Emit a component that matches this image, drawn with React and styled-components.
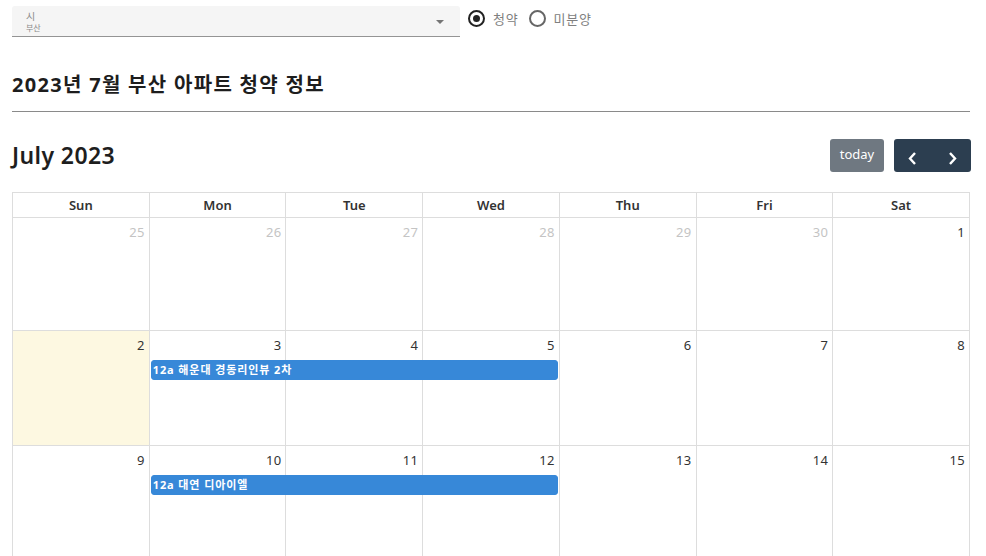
import React from "react"
import styled, { createGlobalStyle } from "styled-components"

const GlobalStyle = createGlobalStyle`
  body {
    margin: 0;
    background: #fff;
    font-family: "Noto Sans", "Noto Sans CJK KR", sans-serif;
    color: #212529;
  }
`

const weeks = [
  [
    { n: 25, other: true },
    { n: 26, other: true },
    { n: 27, other: true },
    { n: 28, other: true },
    { n: 29, other: true },
    { n: 30, other: true },
    { n: 1 },
  ],
  [
    { n: 2, today: true },
    { n: 3 },
    { n: 4 },
    { n: 5 },
    { n: 6 },
    { n: 7 },
    { n: 8 },
  ],
  [{ n: 9 }, { n: 10 }, { n: 11 }, { n: 12 }, { n: 13 }, { n: 14 }, { n: 15 }],
]

const weekHeights = [113, 115, 115]

const events = [
  [],
  [{ start: 2, end: 5, title: "해운대 경동리인뷰 2차" }],
  [{ start: 2, end: 5, title: "대연 디아이엘" }],
]

const days = ["Sun", "Mon", "Tue", "Wed", "Thu", "Fri", "Sat"]

function Radio({ checked, label }) {
  return (
    <RadioLabel>
      <RadioCircle $checked={checked} />
      {label}
    </RadioLabel>
  )
}

function App() {
  return (
    <Page>
      <GlobalStyle />
      <FilterBar>
        <Select>
          <SelectText>
            <SelectLabel>시</SelectLabel>
            <SelectValue>부산</SelectValue>
          </SelectText>
          <Caret />
        </Select>
        <RadioGroup>
          <Radio checked label="청약" />
          <Radio label="미분양" />
        </RadioGroup>
      </FilterBar>

      <Heading>2023년 7월 부산 아파트 청약 정보</Heading>
      <Rule />

      <Toolbar>
        <MonthTitle>July 2023</MonthTitle>
        <Buttons>
          <TodayButton>today</TodayButton>
          <NavGroup>
            <NavButton aria-label="prev">
              <svg width="14" height="16" viewBox="0 0 14 16">
                <path d="M9 3 L4 8.5 L9 14" fill="none" stroke="#fff" strokeWidth="2.4" />
              </svg>
            </NavButton>
            <NavButton aria-label="next">
              <svg width="14" height="16" viewBox="0 0 14 16">
                <path d="M5 3 L10 8.5 L5 14" fill="none" stroke="#fff" strokeWidth="2.4" />
              </svg>
            </NavButton>
          </NavGroup>
        </Buttons>
      </Toolbar>

      <Calendar>
        <HeaderRow>
          {days.map(d => (
            <HeaderCell key={d}>{d}</HeaderCell>
          ))}
        </HeaderRow>
        {weeks.map((week, wi) => (
          <Week key={wi} $height={weekHeights[wi]}>
            {week.map((day, di) => (
              <DayCell key={di} $col={di + 1} $today={day.today}>
                <DayNumber $other={day.other}>{day.n}</DayNumber>
              </DayCell>
            ))}
            {events[wi].map((ev, ei) => (
              <EventBar key={ei} $start={ev.start} $end={ev.end}>
                12a {ev.title}
              </EventBar>
            ))}
          </Week>
        ))}
      </Calendar>
    </Page>
  )
}

const Page = styled.div`
  padding: 6px 16px 0 12px;
  width: 958px;
`
const FilterBar = styled.div`
  display: flex;
  align-items: center;
  gap: 8px;
`
const Select = styled.div`
  width: 448px;
  height: 31px;
  background: #f5f5f5;
  border-bottom: 1px solid #949494;
  display: flex;
  align-items: center;
  justify-content: space-between;
  padding: 0 16px 0 14px;
  box-sizing: border-box;
  border-radius: 3px 3px 0 0;
`
const SelectText = styled.div`
  display: flex;
  flex-direction: column;
  padding-top: 1px;
`
const SelectLabel = styled.span`
  font-size: 10px;
  line-height: 11px;
  color: #8a8a8a;
`
const SelectValue = styled.span`
  font-size: 8px;
  line-height: 9px;
  color: #8a8a8a;
  margin-top: 1px;
`
const Caret = styled.span`
  width: 0;
  height: 0;
  border-left: 4px solid transparent;
  border-right: 4px solid transparent;
  border-top: 4px solid #757575;
  margin-top: 1px;
`
const RadioGroup = styled.div`
  display: flex;
  align-items: center;
  gap: 10px;
`
const RadioLabel = styled.label`
  display: flex;
  align-items: center;
  gap: 8px;
  font-size: 13px;
  letter-spacing: 0.8px;
  color: #808080;
  margin-top: -6px;
`
const RadioCircle = styled.span`
  width: 17px;
  height: 17px;
  box-sizing: border-box;
  border-radius: 50%;
  border: 2px solid ${p => (p.$checked ? "#222" : "#666")};
  display: flex;
  align-items: center;
  justify-content: center;
  &::after {
    content: "";
    width: 7px;
    height: 7px;
    border-radius: 50%;
    background: ${p => (p.$checked ? "#222" : "transparent")};
  }
`
const Heading = styled.h2`
  margin: 34px 0 0;
  font-size: 20px;
  font-weight: 700;
  letter-spacing: 1.3px;
  color: #1d1d1d;
  line-height: 28px;
`
const Rule = styled.hr`
  margin: 12px 0 0;
  border: 0;
  border-top: 1px solid #8a8a8a;
`
const Toolbar = styled.div`
  display: flex;
  align-items: center;
  justify-content: space-between;
  margin-top: 26px;
`
const MonthTitle = styled.h2`
  margin: 0;
  font-size: 23px;
  font-weight: 600;
  letter-spacing: 0.4px;
  color: #1e1e1e;
  line-height: 34px;
`
const Buttons = styled.div`
  display: flex;
  gap: 10px;
  margin-right: -1px;
`
const TodayButton = styled.button`
  width: 54px;
  height: 33px;
  border: 0;
  border-radius: 3px;
  background: #6f7881;
  color: #fff;
  font-family: inherit;
  font-size: 13px;
  padding: 0 0 2px;
`
const NavGroup = styled.div`
  display: flex;
  background: #2c3e50;
  border-radius: 3px;
  width: 77px;
  height: 33px;
  overflow: hidden;
`
const NavButton = styled.button`
  flex: 1;
  border: 0;
  background: transparent;
  display: flex;
  align-items: center;
  justify-content: center;
  padding: 6px 0 0;
`
const Calendar = styled.div`
  margin-top: 20px;
  border-top: 1px solid #ddd;
  border-left: 1px solid #ddd;
`
const HeaderRow = styled.div`
  display: grid;
  grid-template-columns: repeat(7, 1fr);
`
const HeaderCell = styled.div`
  border-right: 1px solid #ddd;
  border-bottom: 1px solid #ddd;
  height: 24px;
  font-size: 13px;
  font-weight: 600;
  color: #333;
  text-align: center;
  line-height: 24px;
`
const Week = styled.div`
  display: grid;
  grid-template-columns: repeat(7, 1fr);
  grid-template-rows: 29px 20px 1fr;
  height: ${p => p.$height}px;
`
const DayCell = styled.div`
  grid-column: ${p => p.$col};
  grid-row: 1 / -1;
  border-right: 1px solid #ddd;
  border-bottom: 1px solid #ddd;
  background: ${p => (p.$today ? "#fdf8e1" : "#fff")};
  padding: 2px 4px 0 0;
  text-align: right;
`
const DayNumber = styled.span`
  font-size: 13px;
  letter-spacing: 0.3px;
  color: ${p => (p.$other ? "#c4c4c4" : "#333")};
  line-height: 18px;
`
const EventBar = styled.div`
  grid-column: ${p => p.$start} / ${p => p.$end};
  grid-row: 2;
  margin: 0 2px 0 1px;
  background: #3788d8;
  border: 1px solid #3788d8;
  border-radius: 3px;
  color: #fff;
  font-size: 11px;
  font-weight: 700;
  letter-spacing: 0.9px;
  line-height: 18px;
  padding: 0 1px;
  white-space: nowrap;
  overflow: hidden;
  z-index: 1;
`

export default App
